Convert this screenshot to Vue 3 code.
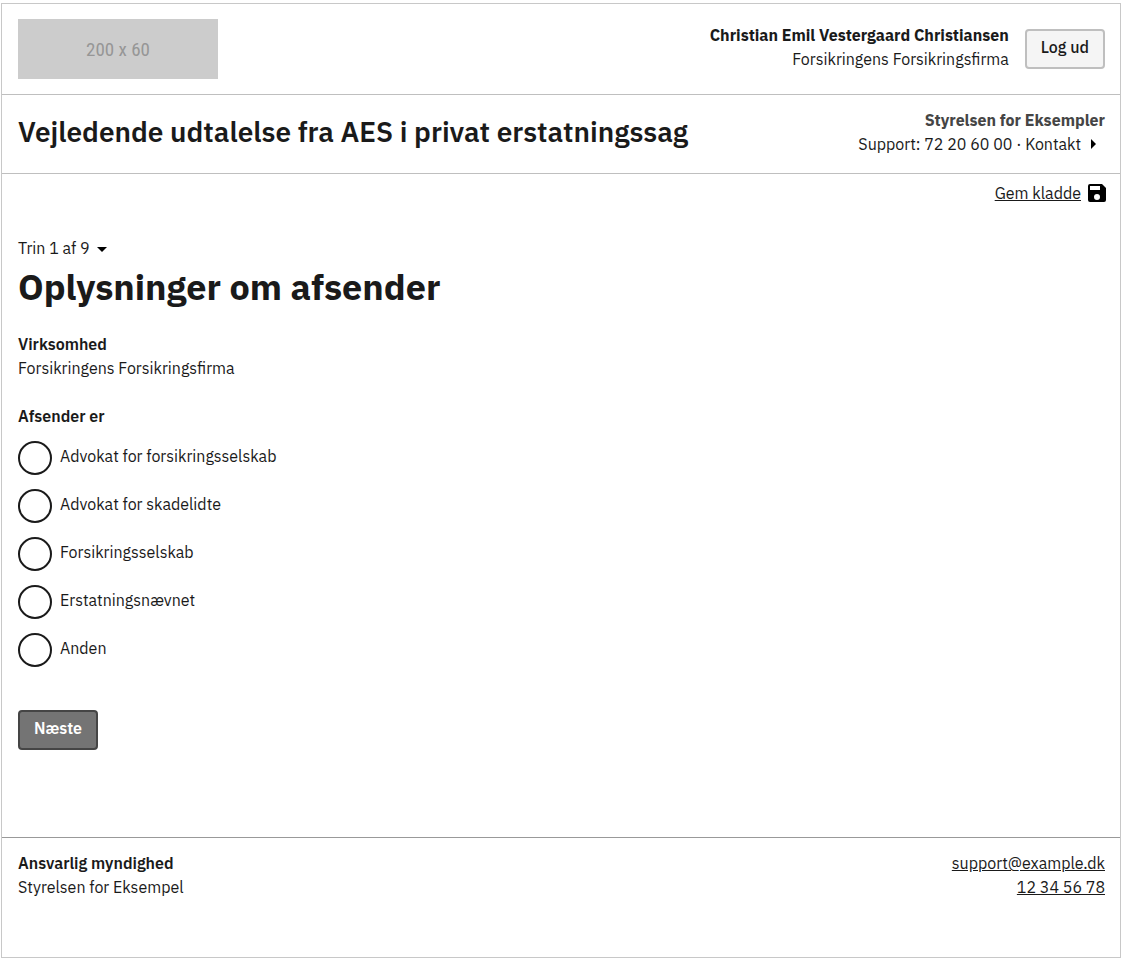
<script setup>
import { ref } from 'vue'

const sender = ref('')
const senderTypes = [
  { id: 'advokat-forsikring', label: 'Advokat for forsikringsselskab' },
  { id: 'advokat-skadelidte', label: 'Advokat for skadelidte' },
  { id: 'forsikringsselskab', label: 'Forsikringsselskab' },
  { id: 'erstatningsnaevnet', label: 'Erstatningsnævnet' },
  { id: 'anden', label: 'Anden' }
]
</script>

<template>
  <div class="page">
    <header class="portal">
      <div class="logo">200 x 60</div>
      <div class="user">
        <div class="right">
          <strong>Christian Emil Vestergaard Christiansen</strong>
          <span>Forsikringens Forsikringsfirma</span>
        </div>
        <button type="button" class="btn secondary">Log ud</button>
      </div>
    </header>

    <div class="solution">
      <p class="title">Vejledende udtalelse fra AES i privat erstatningssag</p>
      <div class="right">
        <strong class="authority">Styrelsen for Eksempler</strong>
        <span>Support: 72 20 60 00 · <a href="#kontakt" class="contact">Kontakt<svg class="caret-right" width="24" height="24" viewBox="0 0 24 24" aria-hidden="true"><path d="M10 7v10l5-5z" /></svg></a></span>
      </div>
    </div>

    <main>
      <div class="draft">
        <a href="#gem">Gem kladde</a>
        <svg width="18" height="18" viewBox="3 3 18 18" aria-hidden="true"><path d="M17 3H5a2 2 0 0 0-2 2v14a2 2 0 0 0 2 2h14a2 2 0 0 0 2-2V7zm-5 16a3 3 0 1 1 0-6 3 3 0 0 1 0 6zm3-10H5V5h10z" /></svg>
      </div>

      <button type="button" class="step">Trin 1 af 9<svg width="24" height="24" viewBox="0 0 24 24" aria-hidden="true"><path d="M7 11h10l-5 5z" /></svg></button>
      <h1>Oplysninger om afsender</h1>

      <dl>
        <dt>Virksomhed</dt>
        <dd>Forsikringens Forsikringsfirma</dd>
      </dl>

      <fieldset>
        <legend>Afsender er</legend>
        <div v-for="type in senderTypes" :key="type.id" class="option">
          <input :id="type.id" v-model="sender" type="radio" name="afsender" :value="type.id">
          <label :for="type.id">{{ type.label }}</label>
        </div>
      </fieldset>

      <button type="button" class="btn primary">Næste</button>
    </main>

    <footer>
      <div>
        <strong>Ansvarlig myndighed</strong>
        <span>Styrelsen for Eksempel</span>
      </div>
      <div class="right">
        <a href="mailto:support@example.dk">support@example.dk</a>
        <a href="tel:12345678">12 34 56 78</a>
      </div>
    </footer>
  </div>
</template>

<style>
body {
  margin: 0;
  background: #fff;
}
</style>

<style scoped>
.page {
  margin: 3px 3px 3px 1px;
  border: 1px solid #c8c8c8;
  color: #1a1a1a;
  font: 400 16px/24px "IBM Plex Sans", "Open Sans", "Noto Sans", sans-serif;
}

.portal,
.solution,
footer {
  display: flex;
  justify-content: space-between;
  align-items: center;
  padding: 15px 15px 15px 16px;
}

.portal,
.solution {
  border-bottom: 1px solid #bfbfbf;
}

.solution {
  padding-top: 13px;
  padding-bottom: 17px;
}

.logo {
  width: 200px;
  height: 60px;
  background: #ccc;
  color: #969696;
  font: 400 19px/62px "Liberation Sans Narrow", "Roboto Condensed", Roboto, sans-serif;
  text-align: center;
}

.user {
  display: flex;
  align-items: center;
  gap: 16px;
}

.user .right {
  padding-bottom: 4px;
}

strong,
dt,
legend {
  font-weight: 600;
}

.right,
footer > div {
  display: flex;
  flex-direction: column;
}

.right {
  align-items: flex-end;
}

.right strong {
  font-weight: 700;
}

.authority {
  color: #454545;
}

a {
  color: inherit;
}

svg {
  fill: #000;
}

.contact {
  text-decoration: none;
}

.caret-right,
.step svg {
  vertical-align: top;
}

.btn {
  height: 40px;
  padding: 0 14px 4px;
  border: 2px solid #bfbfbf;
  border-radius: 4px;
  background: #f5f5f5;
  color: #1a1a1a;
  font: inherit;
  font-weight: 500;
}

.primary {
  border-color: #454545;
  background: #747474;
  color: #fff;
  font-weight: 600;
}

.title {
  margin: 0;
  font-size: 28px;
  line-height: 40px;
  font-weight: 600;
}

main {
  padding: 7px 16px 87px;
}

.draft {
  display: flex;
  justify-content: flex-end;
  align-items: center;
  gap: 7px;
  margin: 0 -2px 31px 0;
}

.step {
  display: block;
  padding: 0;
  border: 0;
  background: none;
  color: inherit;
  font: inherit;
}

h1 {
  margin: 3px 0 21px;
  font-size: 36px;
  line-height: 48px;
  font-weight: 700;
}

dl,
dd {
  margin: 0;
}

fieldset {
  min-width: 0;
  margin: 24px 0 36px;
  padding: 0;
  border: 0;
}

legend {
  padding: 0;
  margin-bottom: 6px;
}

.option {
  display: flex;
  align-items: center;
  gap: 8px;
  height: 48px;
}

.option input {
  appearance: none;
  width: 34px;
  height: 34px;
  margin: 0;
  border: 2px solid #1a1a1a;
  border-radius: 50%;
}

.option label {
  padding-bottom: 4px;
}

.option input:checked {
  background: #1a1a1a;
  box-shadow: inset 0 0 0 6px #fff;
}

footer {
  align-items: flex-start;
  padding-top: 13px;
  padding-bottom: 58px;
  border-top: 1px solid #999;
}
</style>
